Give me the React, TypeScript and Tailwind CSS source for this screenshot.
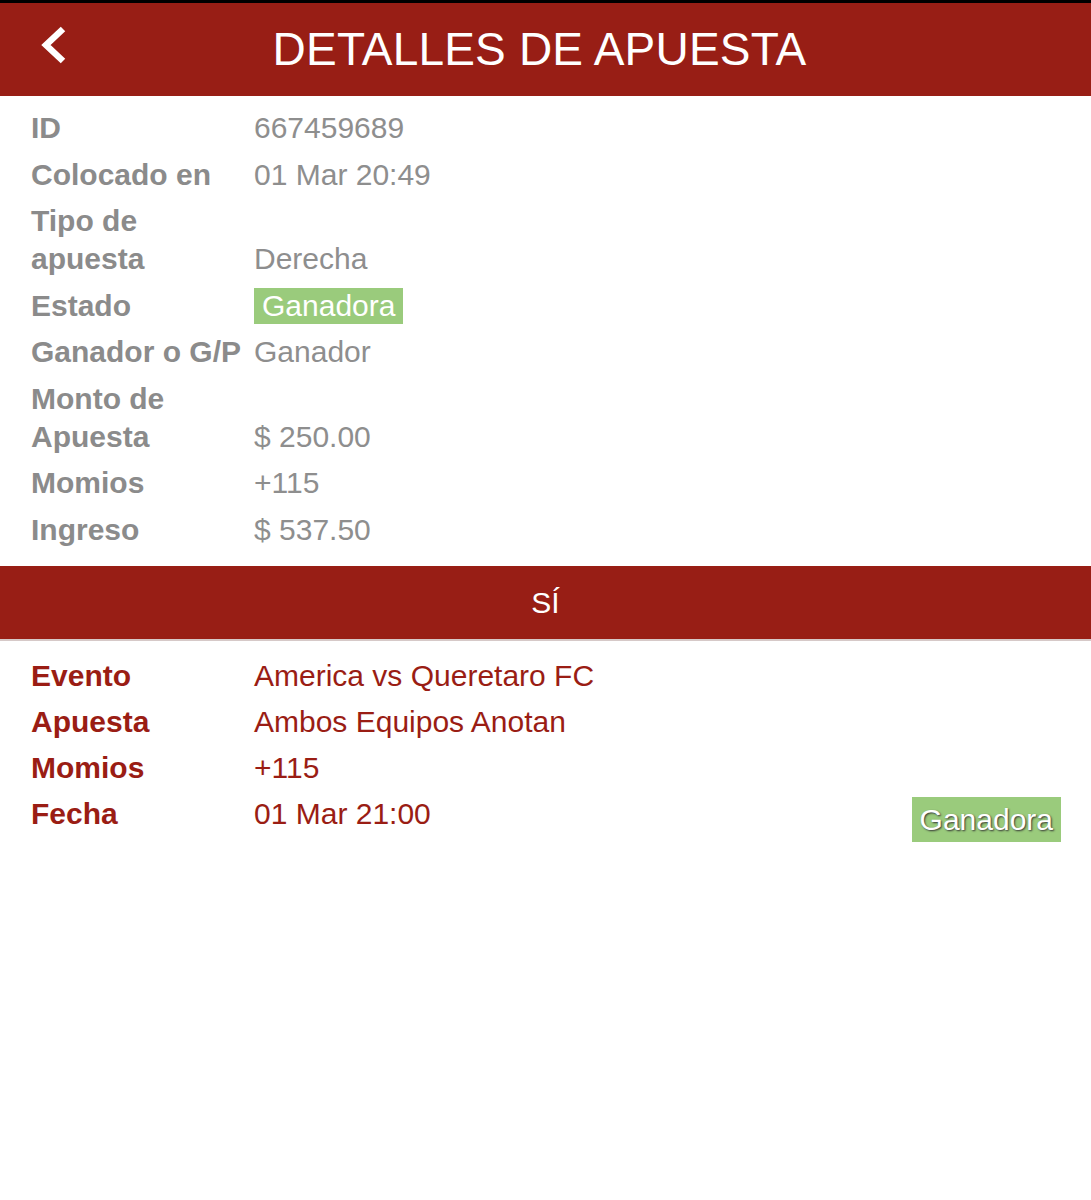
import React from 'react';

const font = { fontFamily: '"Liberation Sans", Arial, sans-serif' };

type Row = { label: string[]; value: React.ReactNode };

function Badge({ shadow }: { shadow?: boolean }) {
  return (
    <span
      className={
        shadow
          ? 'inline-block bg-[#9acb7c] text-white px-[8px] h-[45px] leading-[45px] [text-shadow:1px_1px_2px_#333]'
          : 'inline-block bg-[#9acb7c] text-white px-[8px] h-[36px] leading-[36px]'
      }
    >
      Ganadora
    </span>
  );
}

export default function App() {
  const rows: Row[] = [
    { label: ['ID'], value: '667459689' },
    { label: ['Colocado en'], value: '01 Mar 20:49' },
    { label: ['Tipo de', 'apuesta'], value: 'Derecha' },
    { label: ['Estado'], value: <Badge /> },
    { label: ['Ganador o G/P'], value: 'Ganador' },
    { label: ['Monto de', 'Apuesta'], value: '$ 250.00' },
    { label: ['Momios'], value: '+115' },
    { label: ['Ingreso'], value: '$ 537.50' },
  ];

  const legs = [
    ['Evento', 'America vs Queretaro FC'],
    ['Apuesta', 'Ambos Equipos Anotan'],
    ['Momios', '+115'],
    ['Fecha', '01 Mar 21:00'],
  ];

  return (
    <div className="w-[1091px] min-h-[1200px] bg-white" style={font}>
      <div className="h-[3px] bg-black" />
      <header className="h-[93px] bg-[#981e15] grid grid-cols-[100px_1fr_100px] items-center">
        <div className="pl-[40px] -mt-[10px]">
          <svg width="28" height="38" viewBox="0 0 28 38">
            <polyline points="23,3 6,19 23,35" fill="none" stroke="white" strokeWidth="6.5" />
          </svg>
        </div>
        <h1 className="text-center text-white text-[46px] leading-none tracking-[0.2px] -ml-[12px] pb-[2px]">
          DETALLES DE APUESTA
        </h1>
        <div />
      </header>

      <section className="pt-[13px] pb-[17px] pl-[31px] flex flex-col gap-[8.5px] text-[30px] leading-[38px]">
        {rows.map((r, i) => (
          <div key={i} className="flex items-end">
            <div className="w-[223px] font-bold text-[#8b8b8b]">
              {r.label.map((l) => (
                <div key={l}>{l}</div>
              ))}
            </div>
            <div className="text-[#8e8e8e] flex items-center h-[38px]">{r.value}</div>
          </div>
        ))}
      </section>

      <div className="h-[75px] bg-[#981e15] border-b-2 border-[#d6c9c8] flex items-center justify-center text-white text-[30px] pt-[1px]">
        SÍ
      </div>

      <section className="pt-[16px] pl-[31px] pr-[30px] flex flex-col gap-[8px] text-[30px] leading-[38px] text-[#9a1d14]">
        {legs.map(([k, v], i) => (
          <div key={k} className="flex items-start">
            <div className="w-[223px] font-bold">{k}</div>
            <div className="flex-1">{v}</div>
            {i === legs.length - 1 && (
              <div className="mt-[2px]">
                <Badge shadow />
              </div>
            )}
          </div>
        ))}
      </section>
    </div>
  );
}
